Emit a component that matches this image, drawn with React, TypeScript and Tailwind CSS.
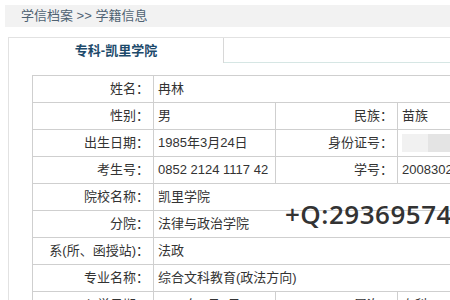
const cjk = { fontFamily: '"Liberation Sans", "Noto Sans CJK SC", sans-serif' };

type Row = { label: string; value: string; label2?: string; value2?: string; blur?: boolean };

const rows: Row[] = [
  { label: '姓名：', value: '冉林' },
  { label: '性别：', value: '男', label2: '民族：', value2: '苗族' },
  { label: '出生日期：', value: '1985年3月24日', label2: '身份证号：', value2: '', blur: true },
  { label: '考生号：', value: '0852 2124 1117 42', label2: '学号：', value2: '200830201' },
  { label: '院校名称：', value: '凯里学院' },
  { label: '分院：', value: '法律与政治学院' },
  { label: '系(所、函授站)：', value: '法政' },
  { label: '专业名称：', value: '综合文科教育(政法方向)' },
  { label: '入学日期：', value: '2008年9月1日', label2: '层次：', value2: '专科' },
];

const td = 'h-[27px] border border-[#cfcfcf] px-[4px] text-[13px] text-[#333] whitespace-nowrap';

const App = () => {
  return (
    <div className="relative h-[300px] w-[450px] overflow-hidden bg-white" style={cjk}>
      <div className="ml-[5px] mt-[5px] flex h-[22px] w-[600px] items-center bg-[#f2f2f2] pl-[16px] text-[13px] text-[#4f6272]">
        学信档案 &gt;&gt; 学籍信息
      </div>

      <div className="ml-[8px] mt-[10px] w-[600px] border-l border-t border-[#e2e2e2]">
        <div className="flex">
          <div className="flex h-[25px] w-[215px] items-center justify-center border-r border-[#d8d8d8] text-[13px] font-bold text-[#1d4a6b]">
            专科-凯里学院
          </div>
          <div className="flex-1 border-b border-[#d6e6e4]" />
        </div>

        <div className="pl-[23px] pt-[12px]">
          <table className="w-[560px] table-fixed border-collapse">
            <colgroup>
              <col className="w-[121px]" />
              <col className="w-[122px]" />
              <col className="w-[122px]" />
              <col />
            </colgroup>
            <tbody>
              {rows.map((r) => (
                <tr key={r.label}>
                  <td className={td + ' text-right'}>{r.label}</td>
                  {r.label2 === undefined ? (
                    <td className={td} colSpan={3}>{r.value}</td>
                  ) : (
                    <>
                      <td className={td}>{r.value}</td>
                      <td className={td + ' text-right'}>{r.label2}</td>
                      <td className={td}>
                        {r.blur ? (
                          <div className="flex h-[18px]">
                            <div className="w-[26px] bg-[#f1f1f1]" />
                            <div className="w-[30px] bg-[#e4e4e4]" />
                          </div>
                        ) : (
                          r.value2
                        )}
                      </td>
                    </>
                  )}
                </tr>
              ))}
            </tbody>
          </table>
        </div>
      </div>

      <div
        className="absolute left-[285px] top-[195px] whitespace-nowrap text-[26px] font-semibold tracking-[0.5px] text-[#333]"
        style={{ fontFamily: '"Open Sans", sans-serif' }}
      >
        +Q:29369574
      </div>
    </div>
  );
};

export default App;
